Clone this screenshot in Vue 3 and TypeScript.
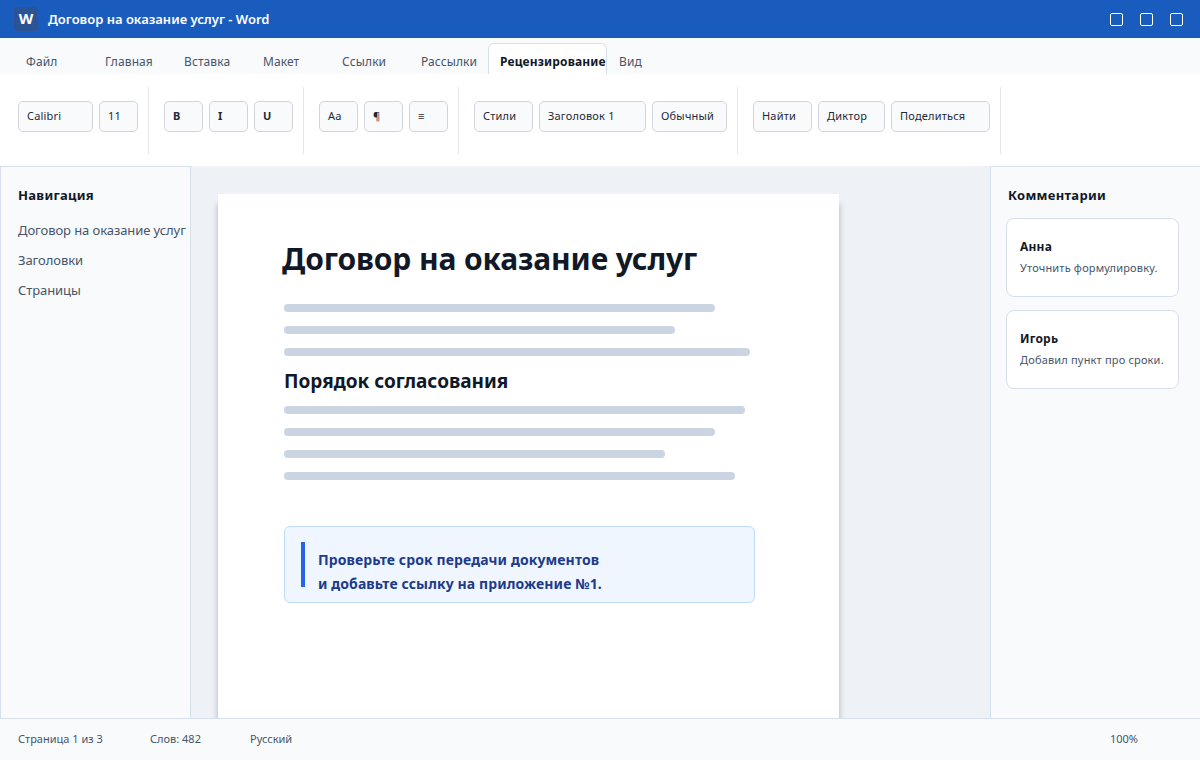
<script setup lang="ts">
interface Tool {
  label: string;
  width: number;
  bold?: boolean;
}

const tabs = ["Файл", "Главная", "Вставка", "Макет", "Ссылки", "Рассылки", "Рецензирование", "Вид"];
const activeTab = "Рецензирование";

const groups: Tool[][] = [
  [
    { label: "Calibri", width: 75 },
    { label: "11", width: 39 },
  ],
  [
    { label: "B", width: 39, bold: true },
    { label: "I", width: 39, bold: true },
    { label: "U", width: 39, bold: true },
  ],
  [
    { label: "Aa", width: 39 },
    { label: "¶", width: 39 },
    { label: "≡", width: 39 },
  ],
  [
    { label: "Стили", width: 59 },
    { label: "Заголовок 1", width: 107 },
    { label: "Обычный", width: 75 },
  ],
  [
    { label: "Найти", width: 59 },
    { label: "Диктор", width: 67 },
    { label: "Поделиться", width: 99 },
  ],
];

const navItems = ["Договор на оказание услуг", "Заголовки", "Страницы"];
const introLines = [431, 391, 466];
const bodyLines = [461, 431, 381, 451];

const comments = [
  { author: "Анна", text: "Уточнить формулировку." },
  { author: "Игорь", text: "Добавил пункт про сроки." },
];
</script>

<template>
  <div class="app">
    <header class="titlebar">
      <div class="logo">W</div>
      <div class="doc-title">Договор на оказание услуг - Word</div>
      <div class="win-controls">
        <span class="win-btn" />
        <span class="win-btn" />
        <span class="win-btn" />
      </div>
    </header>

    <nav class="tabs">
      <div
        v-for="tab in tabs"
        :key="tab"
        class="tab"
        :class="{ active: tab === activeTab }"
      >
        {{ tab }}
      </div>
    </nav>

    <section class="ribbon">
      <div v-for="(group, i) in groups" :key="i" class="group">
        <button
          v-for="tool in group"
          :key="tool.label"
          class="tool"
          :class="{ bold: tool.bold }"
          :style="{ width: tool.width + 'px' }"
        >
          {{ tool.label }}
        </button>
      </div>
    </section>

    <main class="workspace">
      <aside class="nav-pane">
        <h3 class="pane-title">Навигация</h3>
        <div v-for="item in navItems" :key="item" class="nav-item">{{ item }}</div>
      </aside>

      <div class="canvas">
        <article class="page">
          <h1 class="doc-heading">Договор на оказание услуг</h1>
          <div class="lines">
            <div v-for="(w, i) in introLines" :key="i" class="line" :style="{ width: w + 'px' }" />
          </div>
          <h2 class="doc-subheading">Порядок согласования</h2>
          <div class="lines">
            <div v-for="(w, i) in bodyLines" :key="i" class="line" :style="{ width: w + 'px' }" />
          </div>
          <div class="callout">
            <div class="callout-bar" />
            <p class="callout-text">
              Проверьте срок передачи документов<br />
              и добавьте ссылку на приложение №1.
            </p>
          </div>
        </article>
      </div>

      <aside class="comments-pane">
        <h3 class="pane-title">Комментарии</h3>
        <div v-for="c in comments" :key="c.author" class="comment">
          <div class="comment-author">{{ c.author }}</div>
          <div class="comment-text">{{ c.text }}</div>
        </div>
      </aside>
    </main>

    <footer class="statusbar">
      <span class="status-page">Страница 1 из 3</span>
      <span class="status-words">Слов: 482</span>
      <span>Русский</span>
      <span class="status-zoom">100%</span>
    </footer>
  </div>
</template>

<style>
body {
  margin: 0;
}
</style>

<style scoped>
.app {
  width: 1200px;
  height: 760px;
  display: flex;
  flex-direction: column;
  overflow: hidden;
  font-family: "Noto Sans", "Open Sans", sans-serif;
  color: #111827;
  background: #fff;
}

/* title bar */
.titlebar {
  height: 38px;
  flex-shrink: 0;
  display: flex;
  align-items: center;
  padding-left: 14px;
  padding-right: 17px;
  background: #1a5cbd;
  color: #fff;
}

.logo {
  width: 24px;
  height: 24px;
  margin-right: 10px;
  border-radius: 4px;
  background: #2c5494;
  font-size: 15px;
  font-weight: 700;
  line-height: 22px;
  text-align: center;
}

.doc-title {
  font-size: 13px;
  font-weight: 600;
}

.win-controls {
  margin-left: auto;
  display: flex;
  gap: 17px;
}

.win-btn {
  width: 11px;
  height: 11px;
  border: 1px solid #fff;
  border-radius: 2px;
}

/* tabs */
.tabs {
  height: 36px;
  flex-shrink: 0;
  display: flex;
  align-items: flex-end;
  padding-left: 14px;
  background: #f8fafc;
}

.tab {
  width: 79px;
  height: 31px;
  box-sizing: border-box;
  padding: 10px 0 0 12px;
  font-size: 12px;
  line-height: 18px;
  letter-spacing: 0.1px;
  color: #475569;
  white-space: nowrap;
  overflow: hidden;
}

.tab.active {
  width: 119px;
  border: 1px solid #d8dfec;
  border-bottom: none;
  border-radius: 6px 6px 0 0;
  padding: 9px 0 0 11px;
  background: #fff;
  color: #111827;
  font-weight: 700;
  letter-spacing: 0.14px;
}

/* ribbon */
.ribbon {
  height: 92px;
  flex-shrink: 0;
  box-sizing: border-box;
  display: flex;
  align-items: center;
  padding-left: 18px;
  background: #fff;
}

.group {
  height: 67px;
  box-sizing: border-box;
  display: flex;
  align-items: flex-start;
  gap: 6px;
  padding-top: 14px;
  padding-right: 10px;
  margin-right: 15px;
  border-right: 1px solid #e5e7eb;
}

.tool {
  height: 31px;
  box-sizing: border-box;
  padding: 0 0 2px 8px;
  border: 1px solid #d1d5db;
  border-radius: 5px;
  background: #f8fafc;
  color: #1f2937;
  font-family: inherit;
  font-size: 11px;
  letter-spacing: 0.2px;
  text-align: left;
  white-space: nowrap;
}

.tool.bold {
  font-weight: 700;
}

/* main area */
.workspace {
  flex: 1;
  min-height: 0;
  display: flex;
}

.nav-pane {
  width: 191px;
  flex-shrink: 0;
  box-sizing: border-box;
  padding: 19px 0 0 17px;
  background: #f8fafc;
  border: 1px solid #d8dfec;
  border-bottom: none;
}

.comments-pane {
  width: 210px;
  flex-shrink: 0;
  box-sizing: border-box;
  padding: 19px 21px 0 15px;
  background: #f8fafc;
  border-left: 1px solid #d8dfec;
  border-top: 1px solid #d8dfec;
}

.comments-pane .pane-title {
  margin-left: 2px;
}

.pane-title {
  margin: 0 0 14px;
  font-size: 13px;
  font-weight: 700;
  line-height: 18px;
  letter-spacing: 0.3px;
  color: #111827;
}

.nav-pane .pane-title {
  margin-bottom: 17px;
}

.nav-item {
  height: 30px;
  font-size: 13px;
  line-height: 18px;
  letter-spacing: -0.08px;
  color: #475569;
  white-space: nowrap;
}

.canvas {
  flex: 1;
  min-width: 0;
  overflow: hidden;
  padding: 28px 0 0 27px;
  background: #eef2f7;
}

.page {
  width: 621px;
  height: 700px;
  box-sizing: border-box;
  padding: 44px 0 0 66px;
  background: #fff;
  box-shadow: 0 10px 6px rgba(15, 23, 42, 0.3);
}

.doc-heading {
  margin: 0 0 24px -2px;
  font-size: 30px;
  font-weight: 700;
  line-height: 42px;
  letter-spacing: -0.12px;
  color: #111827;
}

.lines {
  display: flex;
  flex-direction: column;
  gap: 14px;
}

.line {
  height: 8px;
  border-radius: 4px;
  background: #cbd5e1;
}

.doc-subheading {
  margin: 11px 0 11px;
  font-size: 19px;
  font-weight: 700;
  line-height: 28px;
  color: #111827;
}

.callout {
  width: 471px;
  height: 77px;
  box-sizing: border-box;
  margin-top: 46px;
  display: flex;
  padding: 15px 0 0 16px;
  background: #eff6ff;
  border: 1px solid #bfdbfe;
  border-radius: 6px;
}

.callout-bar {
  width: 4px;
  height: 45px;
  background: #2563eb;
  margin-right: 13px;
  flex-shrink: 0;
}

.callout-text {
  margin: 6px 0 0;
  font-size: 14px;
  font-weight: 700;
  line-height: 24px;
  letter-spacing: 0.1px;
  color: #1e3a8a;
}

/* comments */
.comment {
  height: 79px;
  box-sizing: border-box;
  margin-bottom: 13px;
  padding: 19px 13px 0;
  background: #fff;
  border: 1px solid #d8dfec;
  border-radius: 8px;
}

.comment-author {
  font-size: 12px;
  font-weight: 700;
  line-height: 18px;
  letter-spacing: 0.2px;
  color: #111827;
}

.comment-text {
  margin-top: 4px;
  font-size: 11px;
  line-height: 16px;
  letter-spacing: 0.18px;
  color: #475569;
  white-space: nowrap;
}

/* status bar */
.statusbar {
  height: 42px;
  flex-shrink: 0;
  box-sizing: border-box;
  display: flex;
  align-items: center;
  padding: 0 62px 2px 18px;
  background: #f8fafc;
  border-top: 1px solid #d8dfec;
  font-size: 11px;
  color: #475569;
}

.status-page {
  width: 132px;
}

.status-words {
  width: 100px;
}

.status-zoom {
  margin-left: auto;
}
</style>
